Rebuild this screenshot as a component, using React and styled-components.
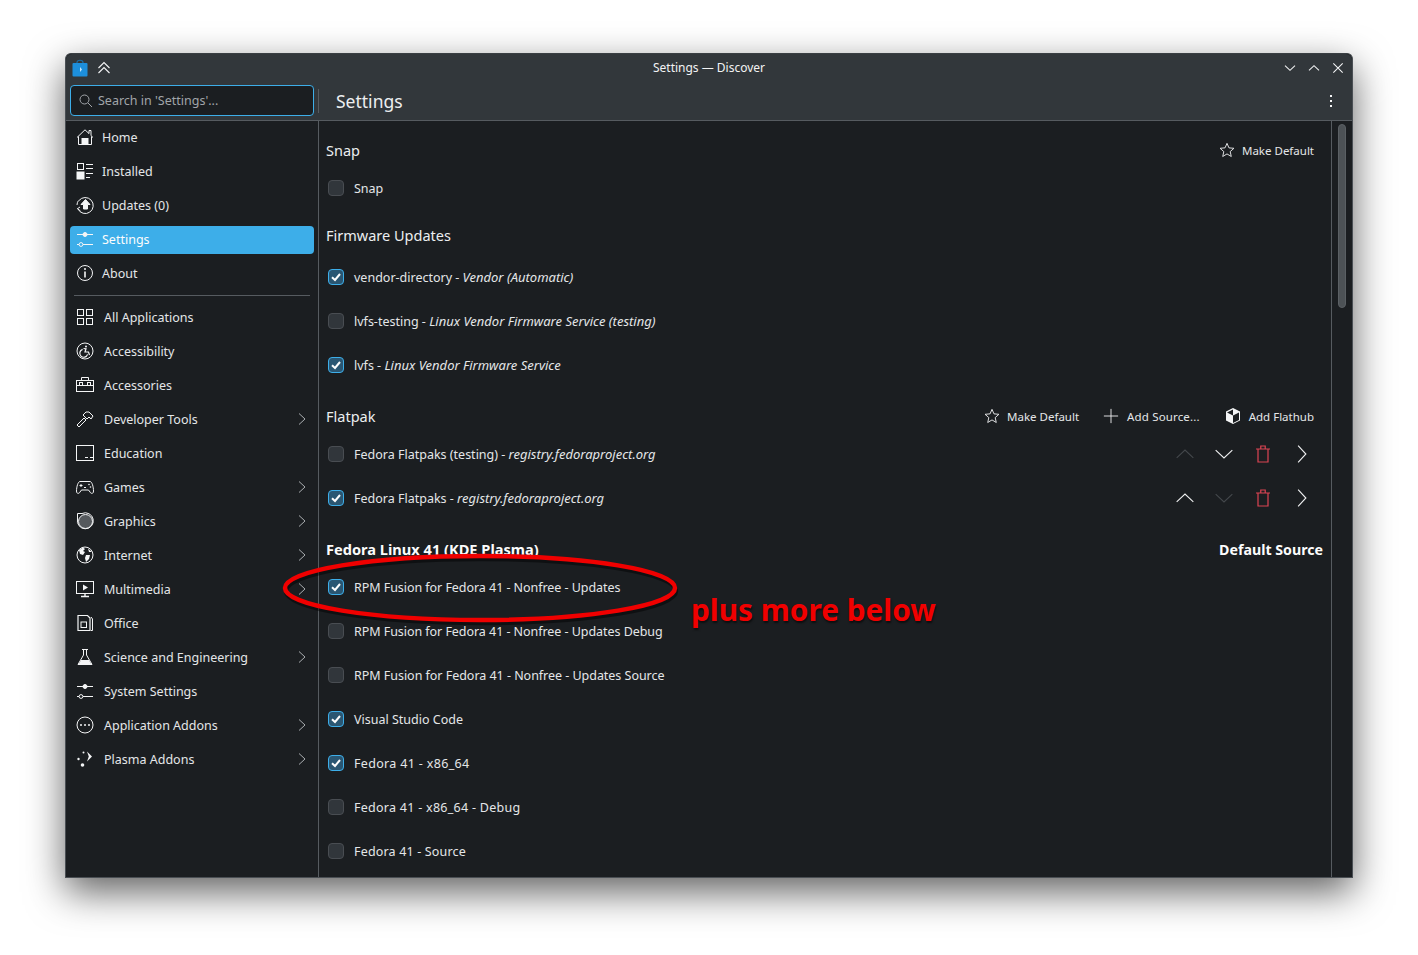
import React from 'react';
import styled, { createGlobalStyle } from 'styled-components';

const Global = createGlobalStyle`
  html, body { margin: 0; padding: 0; background: #fff; }
  body { font-family: "Noto Sans", "Open Sans", sans-serif; font-size: 13px; color: #e8eaec; }
`;

const Page = styled.div`
  width: 1418px;
  height: 955px;
  padding: 53px 65px 77px;
  box-sizing: border-box;
  overflow: hidden;
`;

const Win = styled.div`
  position: relative;
  width: 1288px;
  height: 825px;
  display: flex;
  flex-direction: column;
  background: #1b1e21;
  border: 1px solid #4a4f54;
  border-top-color: #3a3f43;
  border-radius: 6px 6px 0 0;
  box-sizing: border-box;
  box-shadow: 0 14px 38px rgba(0, 0, 0, 0.62);
`;

const Head = styled.header`
  flex: none;
  height: 67px;
  background: #32373b;
  border-bottom: 1px solid #565b60;
  border-radius: 6px 6px 0 0;
  box-sizing: border-box;
`;

const TitleBar = styled.div`
  height: 27px;
  position: relative;
  display: flex;
  align-items: center;
  justify-content: space-between;
  padding: 0 8px 0 6px;
`;

const TitleLeft = styled.div`
  display: flex;
  align-items: center;
  gap: 8px;
`;

const TitleText = styled.div`
  position: absolute;
  left: 0;
  right: 0;
  text-align: center;
  font-size: 12px;
  color: #f2f3f4;
`;

const WinButtons = styled.div`
  display: flex;
  align-items: center;
  gap: 12px;
`;

const ToolBar = styled.div`
  height: 39px;
  display: flex;
  align-items: center;
  padding: 0 19px 0 4px;
`;

const SearchBox = styled.div`
  width: 244px;
  height: 31px;
  display: flex;
  align-items: center;
  gap: 5px;
  padding: 0 8px;
  box-sizing: border-box;
  border: 1px solid #3daee9;
  border-radius: 4px;
  background: #1b1e21;
  color: #a1a5a9;
  font-size: 12.5px;
`;

const ToolSep = styled.div`
  width: 1px;
  height: 24px;
  margin: 0 17px 0 4px;
  background: #565b60;
`;

const PageTitle = styled.div`
  flex: 1;
  font-size: 17.5px;
  color: #eceef0;
`;

const Body = styled.div`
  flex: 1;
  min-height: 0;
  display: flex;
  overflow: hidden;
`;

const Sidebar = styled.nav`
  flex: none;
  width: 253px;
  padding: 3px 4px 0;
  box-sizing: border-box;
  border-right: 1px solid #565b60;
  display: flex;
  flex-direction: column;
  gap: 6px;
`;

const NavItem = styled.div`
  height: 28px;
  display: flex;
  align-items: center;
  gap: ${({ $wide }) => ($wide ? '10px' : '8px')};
  padding: 0 0 ${({ $wide }) => ($wide ? '0' : '2px')} 6px;
  box-sizing: border-box;
  border-radius: 4px;
  background: ${({ $active }) => ($active ? '#3daee9' : 'transparent')};
  color: ${({ $active }) => ($active ? '#fcfcfc' : '#e4e6e8')};
  font-size: 12.5px;
  white-space: nowrap;
`;

const NavIcon = styled.span`
  flex: none;
  width: 18px;
  height: 18px;
  display: flex;
`;

const NavLabel = styled.span`
  flex: 1;
`;

const NavArrow = styled.span`
  flex: none;
  width: 12px;
  margin-right: 6px;
  display: flex;
`;

const NavDivider = styled.div`
  height: 1px;
  margin: 1px 4px;
  background: #565b60;
`;

const Main = styled.main`
  flex: 1;
  min-width: 0;
  overflow: hidden;
  padding: 0 8px 0 7px;
`;

const Section = styled.section`
  padding-top: 15px;
`;

const SectionHead = styled.div`
  height: 30px;
  box-sizing: border-box;
  padding-bottom: 2px;
  margin-bottom: ${({ $spaced }) => ($spaced ? '4px' : '0')};
  display: flex;
  align-items: center;
  justify-content: space-between;
`;

const SectionTitle = styled.h2`
  margin: 0;
  font-size: ${({ $bold }) => ($bold ? '14.6px' : '14.5px')};
  font-weight: ${({ $bold }) => ($bold ? 700 : 400)};
  color: ${({ $bold }) => ($bold ? '#fcfcfc' : '#eceef0')};
`;

const Actions = styled.div`
  display: flex;
  align-items: center;
  gap: 24px;
  padding-right: 9px;
`;

const Action = styled.div`
  display: flex;
  align-items: center;
  gap: ${({ $wide }) => ($wide ? '8px' : '7px')};
  letter-spacing: ${({ $wide }) => ($wide ? '0.15px' : '0')};
  font-size: 11.5px;
  color: #e4e6e8;
`;

const DefaultLabel = styled.div`
  font-size: 14.2px;
  font-weight: 700;
  color: #fcfcfc;
`;

const Row = styled.div`
  height: ${({ $short }) => ($short ? '36px' : '44px')};
  display: flex;
  align-items: center;
  padding: 0 2px;
  gap: 10px;
  font-size: 12.5px;
  color: #e4e6e8;
  white-space: nowrap;
`;

const RowText = styled.div`
  flex: 1;
  letter-spacing: ${({ $track }) => $track || 0}px;

  em {
    font-style: italic;
    font-size: 13px;
  }
`;

const RowButtons = styled.div`
  display: flex;
  align-items: center;
  gap: 19px;
  padding-right: 9px;
`;

const Box = styled.span`
  flex: none;
  width: 16px;
  height: 16px;
  box-sizing: border-box;
  display: flex;
  align-items: center;
  justify-content: center;
  border-radius: 4px;
  border: 1px solid ${({ $on }) => ($on ? '#3daee9' : '#494d52')};
  background: ${({ $on }) => ($on ? '#2a5672' : '#31363b')};
`;

const Scroll = styled.aside`
  flex: none;
  width: 21px;
  border-left: 1px solid #565b60;
  box-sizing: border-box;
  padding: 3px 0 0 6px;
`;

const Thumb = styled.div`
  width: 8px;
  height: 184px;
  border-radius: 4px;
  background: #4d5256;
  border: 1px solid #5b6064;
  box-sizing: border-box;
`;

const Overlay = styled.svg`
  position: absolute;
  left: 208px;
  top: 490px;
  pointer-events: none;
  overflow: visible;
`;

const Note = styled.div`
  position: absolute;
  left: 625px;
  top: 535px;
  font-size: 29.8px;
  font-weight: 700;
  line-height: 42px;
  color: #f00000;
  text-shadow: 1px 2px 2px rgba(0, 0, 0, 0.55);
  white-space: nowrap;
`;

const Ico = ({ size = 18, children, color = '#f4f5f6', ...rest }) => (
  <svg
    width={size}
    height={size}
    viewBox="0 0 18 18"
    fill="none"
    stroke={color}
    strokeWidth="1"
    {...rest}
  >
    {children}
  </svg>
);

const Chevron = ({ dir = 'right', color = '#f0f1f2', size = 18, weight = 1 }) => {
  const d = {
    right: 'M5.5 1.5 L12.5 9 L5.5 16.5',
    up: 'M1.5 12.5 L9 5.5 L16.5 12.5',
    down: 'M1.5 5.5 L9 12.5 L16.5 5.5',
  }[dir];
  return (
    <Ico size={size} color={color} strokeWidth={weight}>
      <path d={d} />
    </Ico>
  );
};

const SideChevron = () => (
  <svg width="12" height="16" viewBox="0 0 12 16" fill="none" stroke="#a9adb0">
    <path d="M3 2.5 L9 8 L3 13.5" />
  </svg>
);

const Sliders = () => (
  <Ico>
    <path d="M1 4.5h16M1 14.5h2M7 14.5h10" />
    <circle cx="9" cy="4.5" r="2" fill="#f4f5f6" />
    <circle cx="5" cy="14.5" r="1.9" />
  </Ico>
);

const icons = {
  home: (
    <Ico>
      <path d="M1 9.5 L9 1.8 L13 5.6 V2.5 H15 V7.6 L17 9.5" />
      <path d="M2.5 8.5 V16.5 H15.5 V8.5" />
      <rect x="6" y="10.5" width="6" height="6" fill="#f4f5f6" />
    </Ico>
  ),
  installed: (
    <Ico>
      <rect x="1.5" y="1.5" width="6" height="6" />
      <rect x="1" y="10" width="7" height="7" fill="#f4f5f6" />
      <path d="M10 2.5h7M10 6.5h7M10 11.5h7M10 15.5h4" />
    </Ico>
  ),
  updates: (
    <Ico>
      <path d="M3 4.5 A8 8 0 1 1 2 13" />
      <path d="M1 9 A8 8 0 0 1 2.5 4.5" />
      <path d="M9.5 3.5 L14 8.5 H11.5 V13 H7.5 V8.5 H5 Z" fill="#f4f5f6" />
      <path d="M1 13 L4 11 M2 13 L4.5 15" />
    </Ico>
  ),
  settings: <Sliders />,
  about: (
    <Ico>
      <circle cx="9" cy="9" r="7.5" />
      <path d="M9 7.5v6" strokeWidth="1.6" />
      <circle cx="9" cy="5" r="1" fill="#f4f5f6" stroke="none" />
    </Ico>
  ),
  all: (
    <Ico>
      <rect x="1.5" y="1.5" width="6" height="6" />
      <rect x="10.5" y="1.5" width="6" height="6" />
      <rect x="1.5" y="10.5" width="6" height="6" />
      <rect x="10.5" y="10.5" width="6" height="6" />
    </Ico>
  ),
  accessibility: (
    <Ico>
      <circle cx="9" cy="9" r="8" />
      <circle cx="10" cy="4.5" r="1" fill="#f4f5f6" stroke="none" />
      <path d="M6.6 7.4 A4 4 0 1 0 11.6 12.4" strokeWidth="1.2" />
      <path d="M7.5 6.5 L10 6.8 L9 10 H12.5 L13.5 13" strokeWidth="1.2" />
    </Ico>
  ),
  accessories: (
    <Ico>
      <rect x="0.5" y="4.5" width="17" height="11" />
      <path d="M5.5 4.5 V1.5 H12.5 V4.5" />
      <path d="M0.5 9.5h17" />
      <rect x="3.5" y="6.5" width="3" height="3" />
      <rect x="11.5" y="6.5" width="3" height="3" />
    </Ico>
  ),
  dev: (
    <Ico>
      <path d="M1 15 L8 8 L10 10 L3 17 Z" />
      <path d="M7 5 L10 2 H13 L17 6 L15 9 L13 7 L11 9 Z" />
    </Ico>
  ),
  education: (
    <Ico>
      <rect x="0.5" y="1.5" width="17" height="15" />
      <path d="M9 13.5h3M14 13.5h3" />
    </Ico>
  ),
  games: (
    <Ico>
      <path d="M4 3.5 H14 C16 3.5 17.5 9 17.5 13 C17.5 16 15 16 14 14 L12.5 12 H5.5 L4 14 C3 16 0.5 16 0.5 13 C0.5 9 2 3.5 4 3.5 Z" />
      <path d="M3.5 7.5h3M5 6v3M8 9.5h2" />
      <circle cx="13" cy="6.5" r="0.8" fill="#f4f5f6" stroke="none" />
      <circle cx="14.5" cy="9" r="0.8" fill="#f4f5f6" stroke="none" />
    </Ico>
  ),
  graphics: (
    <Ico>
      <circle cx="9.5" cy="9.5" r="7" fill="#55595d" />
      <path d="M1.5 1.5 H6 A8 8 0 1 1 1.5 7 Z" />
    </Ico>
  ),
  internet: (
    <Ico>
      <circle cx="9" cy="9" r="8" />
      <path
        d="M3 4 L7 1.5 L9 3 L7 5 L9 6 L7 9 L4 8 Z M10 9 L14 9 L13 13 L10 16 L9 12 Z M12 2.5 L16 6 L13 6 Z"
        fill="#f4f5f6"
        stroke="none"
      />
    </Ico>
  ),
  multimedia: (
    <Ico>
      <rect x="0.5" y="1.5" width="17" height="12" />
      <path d="M7 4.5 L12 7.5 L7 10.5 Z" fill="#f4f5f6" stroke="none" />
      <path d="M9 13.5 V16M5 16.5 H13" strokeWidth="1.4" />
    </Ico>
  ),
  office: (
    <Ico>
      <path d="M2 1.5 H11.5 L14 4 V16.5 H2 Z" strokeWidth="1.2" />
      <path d="M15 3 L16.5 5 V16.5 H15" />
      <rect x="5" y="8" width="5.5" height="5.5" />
    </Ico>
  ),
  science: (
    <Ico>
      <path d="M6 1.5 H12 M7.5 1.5 V7 L2 16.5 H16 L10.5 7 V1.5" />
      <path d="M5 12 H13 L15.5 16.5 H2.5 Z" fill="#f4f5f6" stroke="none" />
    </Ico>
  ),
  system: <Sliders />,
  addons: (
    <Ico>
      <circle cx="9" cy="9" r="8" />
      <circle cx="5" cy="9" r="1" fill="#f4f5f6" stroke="none" />
      <circle cx="9" cy="9" r="1" fill="#f4f5f6" stroke="none" />
      <circle cx="13" cy="9" r="1" fill="#f4f5f6" stroke="none" />
    </Ico>
  ),
  plasma: (
    <Ico stroke="none" color="none">
      <path d="M11 1.5 L16 6.5 L11 11.5 L12.8 6.5 Z" fill="#f4f5f6" />
      <circle cx="7.5" cy="2.5" r="1" fill="#f4f5f6" />
      <circle cx="2.5" cy="9" r="1.2" fill="#f4f5f6" />
      <circle cx="6.5" cy="15" r="1.8" fill="#f4f5f6" />
    </Ico>
  ),
};

const topNav = [
  ['Home', 'home'],
  ['Installed', 'installed'],
  ['Updates (0)', 'updates'],
  ['Settings', 'settings', true],
  ['About', 'about'],
];

const categories = [
  ['All Applications', 'all'],
  ['Accessibility', 'accessibility'],
  ['Accessories', 'accessories'],
  ['Developer Tools', 'dev', true],
  ['Education', 'education'],
  ['Games', 'games', true],
  ['Graphics', 'graphics', true],
  ['Internet', 'internet', true],
  ['Multimedia', 'multimedia', true],
  ['Office', 'office'],
  ['Science and Engineering', 'science', true],
  ['System Settings', 'system'],
  ['Application Addons', 'addons', true],
  ['Plasma Addons', 'plasma', true],
];

const fedoraRows = [
  ['RPM Fusion for Fedora 41 - Nonfree - Updates', true, -0.05],
  ['RPM Fusion for Fedora 41 - Nonfree - Updates Debug', false, -0.05],
  ['RPM Fusion for Fedora 41 - Nonfree - Updates Source', false, -0.03],
  ['Visual Studio Code', true, 0],
  ['Fedora 41 - x86_64', true, 0.33],
  ['Fedora 41 - x86_64 - Debug', false, 0.27],
  ['Fedora 41 - Source', false, 0.17],
];

const Check = ({ on }) => (
  <Box $on={on}>
    {on && (
      <svg width="12" height="12" viewBox="0 0 12 12" fill="none" stroke="#fcfcfc" strokeWidth="2">
        <path d="M2 6.2 L5 9 L10 3" />
      </svg>
    )}
  </Box>
);

const Star = () => (
  <Ico size={16}>
    <path d="M9 1.5 L11.2 6.6 L16.8 7.1 L12.6 10.8 L13.8 16.3 L9 13.4 L4.2 16.3 L5.4 10.8 L1.2 7.1 L6.8 6.6 Z" />
  </Ico>
);

const Trash = () => (
  <Ico size={20} color="#da4453">
    <path d="M2.7 4.5 H15.3 M7 4.5 V1.8 H11 V4.5 M4.5 4.5 V16.2 H13.5 V4.5" strokeWidth="1.1" />
  </Ico>
);

const Cube = () => (
  <Ico size={18}>
    <path d="M9 1 L16 4.5 V13.5 L9 17 L2 13.5 V4.5 Z" fill="#f4f5f6" stroke="none" />
    <path d="M9 8.5 L15 5.5 V13 L9 16 Z" fill="#1b1e21" stroke="none" />
    <path d="M9 8.5 L3 5.5 L9 2.5 Z" fill="#1b1e21" stroke="none" />
  </Ico>
);

const SourceButtons = ({ upOff, downOff }) => (
  <RowButtons>
    <Chevron dir="up" color={upOff ? '#44484c' : '#f0f1f2'} size={20} />
    <Chevron dir="down" color={downOff ? '#44484c' : '#f0f1f2'} size={20} />
    <Trash />
    <Chevron dir="right" size={20} />
  </RowButtons>
);

const App = () => (
  <Page>
    <Global />
    <Win>
      <Head>
        <TitleBar>
          <TitleLeft>
            <svg width="16" height="18" viewBox="0 0 16 18">
              <path d="M5 6 V3.5 C5 0.5 11 0.5 11 3.5 V6" fill="none" stroke="#1d6fa8" strokeWidth="1.2" />
              <rect x="0.5" y="4" width="15" height="13.5" rx="1" fill="#1d8fdc" />
              <path d="M8 8 L10 10.5 L8 13 Z" fill="#c6e6fa" />
            </svg>
            <svg width="16" height="14" viewBox="0 0 16 14" fill="none" stroke="#f4f5f6" strokeWidth="1.1">
              <path d="M2.5 7 L8 1.5 L13.5 7 M2.5 12 L8 6.5 L13.5 12" />
            </svg>
          </TitleLeft>
          <TitleText>Settings — Discover</TitleText>
          <WinButtons>
            <Chevron dir="down" size={12} weight={1.6} />
            <Chevron dir="up" size={12} weight={1.6} />
            <Ico size={12}>
              <path d="M2 2 L16 16 M16 2 L2 16" strokeWidth="1.6" />
            </Ico>
          </WinButtons>
        </TitleBar>
        <ToolBar>
          <SearchBox>
            <svg width="14" height="14" viewBox="0 0 14 14" fill="none" stroke="#a1a5a9">
              <circle cx="5.5" cy="5.5" r="4.5" />
              <path d="M9 9 L13 13" />
            </svg>
            Search in 'Settings'...
          </SearchBox>
          <ToolSep />
          <PageTitle>Settings</PageTitle>
          <svg width="4" height="14" viewBox="0 0 4 14" fill="#f4f5f6">
            <rect x="1" y="1" width="2" height="2" />
            <rect x="1" y="6" width="2" height="2" />
            <rect x="1" y="11" width="2" height="2" />
          </svg>
        </ToolBar>
      </Head>
      <Body>
        <Sidebar>
          {topNav.map(([label, icon, active]) => (
            <NavItem key={label} $active={active}>
              <NavIcon>{icons[icon]}</NavIcon>
              <NavLabel>{label}</NavLabel>
            </NavItem>
          ))}
          <NavDivider />
          {categories.map(([label, icon, more]) => (
            <NavItem key={label} $wide>
              <NavIcon>{icons[icon]}</NavIcon>
              <NavLabel>{label}</NavLabel>
              {more && (
                <NavArrow>
                  <SideChevron />
                </NavArrow>
              )}
            </NavItem>
          ))}
        </Sidebar>
        <Main>
          <Section>
            <SectionHead $spaced>
              <SectionTitle>Snap</SectionTitle>
              <Actions>
                <Action>
                  <Star />
                  Make Default
                </Action>
              </Actions>
            </SectionHead>
            <Row $short>
              <Check />
              <RowText>Snap</RowText>
            </Row>
          </Section>
          <Section>
            <SectionHead $spaced>
              <SectionTitle>Firmware Updates</SectionTitle>
            </SectionHead>
            <Row>
              <Check on />
              <RowText>
                vendor-directory - <em>Vendor (Automatic)</em>
              </RowText>
            </Row>
            <Row>
              <Check />
              <RowText>
                lvfs-testing - <em>Linux Vendor Firmware Service (testing)</em>
              </RowText>
            </Row>
            <Row>
              <Check on />
              <RowText>
                lvfs - <em>Linux Vendor Firmware Service</em>
              </RowText>
            </Row>
          </Section>
          <Section>
            <SectionHead>
              <SectionTitle>Flatpak</SectionTitle>
              <Actions>
                <Action>
                  <Star />
                  Make Default
                </Action>
                <Action $wide>
                  <Ico size={16}>
                    <path d="M9 1v16M1 9h16" />
                  </Ico>
                  Add Source...
                </Action>
                <Action>
                  <Cube />
                  Add Flathub
                </Action>
              </Actions>
            </SectionHead>
            <Row>
              <Check />
              <RowText>
                Fedora Flatpaks (testing) - <em>registry.fedoraproject.org</em>
              </RowText>
              <SourceButtons upOff />
            </Row>
            <Row>
              <Check on />
              <RowText>
                Fedora Flatpaks - <em>registry.fedoraproject.org</em>
              </RowText>
              <SourceButtons downOff />
            </Row>
          </Section>
          <Section>
            <SectionHead>
              <SectionTitle $bold>Fedora Linux 41 (KDE Plasma)</SectionTitle>
              <DefaultLabel>Default Source</DefaultLabel>
            </SectionHead>
            {fedoraRows.map(([label, on, track]) => (
              <Row key={label}>
                <Check on={on} />
                <RowText $track={track}>{label}</RowText>
              </Row>
            ))}
          </Section>
        </Main>
        <Scroll>
          <Thumb />
        </Scroll>
      </Body>
      <Overlay width="410" height="80" viewBox="0 0 410 80">
        <ellipse cx="206" cy="45" rx="195" ry="32" fill="none" stroke="#000" strokeOpacity="0.45" strokeWidth="4.5" transform="translate(1 2)" />
        <ellipse cx="206" cy="44" rx="195" ry="32" fill="none" stroke="#f00000" strokeWidth="4.5" />
      </Overlay>
      <Note>plus more below</Note>
    </Win>
  </Page>
);

export default App;
